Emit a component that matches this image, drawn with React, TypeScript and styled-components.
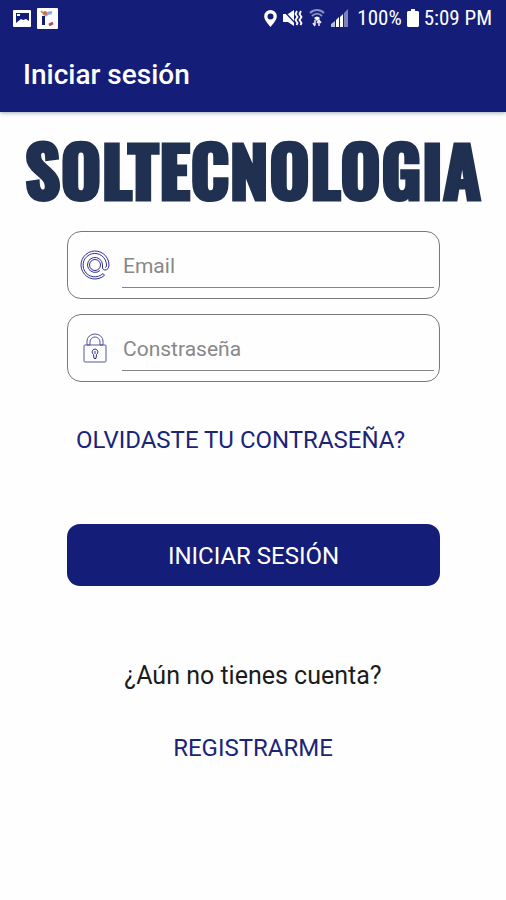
import React from 'react';
import styled, { createGlobalStyle } from 'styled-components';

const navy = '#141e78';

const GlobalStyle = createGlobalStyle`
  *, *::before, *::after { box-sizing: border-box; }
  body {
    margin: 0;
    background: #fefefe;
    font-family: Roboto, "Liberation Sans", sans-serif;
  }
`;

const Screen = styled.div`
  min-height: 100vh;
  display: flex;
  flex-direction: column;
`;

const Header = styled.header`
  background: ${navy};
  color: #fff;
  box-shadow: 0 1px 4px rgba(20, 50, 60, 0.4);
`;

const StatusBar = styled.div`
  display: flex;
  align-items: center;
  justify-content: space-between;
  height: 36px;
  padding: 0 14px 0 13px;
  font-family: "Roboto Condensed", Roboto, sans-serif;
  font-size: 21px;
  line-height: 36px;
`;

const StatusGroup = styled.div<{ $gap: number }>`
  display: flex;
  align-items: center;
  gap: ${({ $gap }) => $gap}px;

  svg { display: block; }
`;

const Title = styled.h1`
  margin: 0;
  padding: 23px 23px 21px;
  font-size: 28px;
  line-height: 32px;
  font-weight: 500;
`;

const Main = styled.main`
  display: flex;
  flex-direction: column;
  padding-top: 21px;
`;

const Brand = styled.div`
  color: #203050;
  font-family: Oswald, Impact, "Roboto Condensed", sans-serif;
  font-size: 70px;
  line-height: 70px;
  font-weight: 700;
  -webkit-text-stroke: 3px #203050;
  text-align: center;
  white-space: nowrap;
`;

const Form = styled.form`
  display: flex;
  flex-direction: column;
  padding: 28px 66px 0 67px;
`;

const Field = styled.label`
  display: flex;
  align-items: center;
  height: 68px;
  margin-bottom: 15px;
  padding: 0 5px 0 12px;
  border: 1px solid #77777c;
  border-radius: 14px;

  svg { flex: none; }
`;

const TextInput = styled.input`
  flex: 1;
  min-width: 0;
  height: 46px;
  margin-left: 12px;
  padding: 3px 1px 0;
  border: 0;
  border-bottom: 1px solid #858585;
  background: transparent;
  color: #222;
  font: 400 21px/24px Roboto, "Liberation Sans", sans-serif;

  &::placeholder { color: #888; opacity: 1; }
`;

const TextLink = styled.a`
  color: #1c2478;
  font-size: 24px;
  line-height: 30px;
  text-decoration: none;
`;

const ForgotLink = styled(TextLink)`
  align-self: flex-start;
  margin: 28px 0 0 9px;
`;

const SubmitButton = styled.button`
  height: 62px;
  margin-top: 69px;
  padding: 2px 0 0;
  border: 0;
  border-radius: 13px;
  background: ${navy};
  color: #fff;
  font: 400 24px/30px Roboto, "Liberation Sans", sans-serif;
`;

const SignUp = styled.section`
  display: flex;
  flex-direction: column;
  align-items: center;
  gap: 42px;
  padding-top: 75px;
`;

const Question = styled.p`
  margin: 0;
  color: #1c1c1c;
  font-size: 25px;
  line-height: 30px;
`;

const PictureIcon = () => (
  <svg width="18" height="17" viewBox="0 0 18 17" aria-hidden="true">
    <rect width="18" height="17" rx="1" fill="#fff" />
    <path d="M3 3h13v8l-3-2-3 1-2-1-5 4z" fill={navy} />
    <path d="M4 4h3v2H4z" fill="#fff" />
  </svg>
);

const AppIcon = () => (
  <svg width="21" height="21" viewBox="0 0 21 21" aria-hidden="true">
    <rect width="21" height="21" rx="1" fill="#fff" />
    <path d="M5 8h3v9H5z" fill={navy} />
    <path d="M8 8c2-3 4-4 7-3" fill="none" stroke="#8eaade" strokeWidth="3" />
    <path d="M4 3l4 4" stroke="#d39a67" strokeWidth="2" />
    <circle cx="8" cy="5" r="2" fill="#d86a3a" />
    <path d="M12 17l4-2" stroke="#b34a54" strokeWidth="3" />
  </svg>
);

const PinIcon = () => (
  <svg width="13" height="19" viewBox="0 0 13 19" aria-hidden="true">
    <path fill="#fff" fillRule="evenodd" d="M6.500 1A6.300 6.300 0 0 0 .2 7.300C.2 11 4 15 6.500 18 9 15 12.800 11 12.800 7.300A6.300 6.300 0 0 0 6.500 1zm0 3.500a3 3 0 1 1 0 6 3 3 0 0 1 0-6z" />
  </svg>
);

const VibrateIcon = () => (
  <svg width="20" height="18" viewBox="0 0 20 18" aria-hidden="true">
    <path d="M0 5h5l6-4v16l-6-4H0z" fill="#fff" />
    <path d="M0 1l13 14" stroke={navy} strokeWidth="1.200" />
    <path d="M14 2l-1.500 3 2 3-2 3 2 3-1 2M18 2l-1.500 3 2 3-2 3 2 3-1 2" fill="none" stroke="#fff" strokeWidth="1.800" />
  </svg>
);

const WifiIcon = () => (
  <svg width="16" height="18" viewBox="0 0 16 18" aria-hidden="true">
    <path d="M1 4c4-4 10-4 14 0M3 7c3-3 7-3 10 0" fill="none" stroke="#8990c3" strokeWidth="2" />
    <path d="M5 9c2-2 4-2 6 0l-3 3z" fill="#fff" />
    <path d="M6 11v5M4 14l2 3M10 17v-5M8 14l2-3 2 3" fill="none" stroke="#e8eaf6" strokeWidth="1.500" />
  </svg>
);

const SignalIcon = () => (
  <svg width="18" height="18" viewBox="0 0 18 18" aria-hidden="true">
    <path d="M0 18v-3l4-3v6z" fill="#b9bddc" />
    <path d="M5 18v-7l3-3v10zM9 18V8l3-3v13z" fill="#fff" />
    <path d="M13 18V4l4-4v18z" fill="#7b82bb" />
  </svg>
);

const BatteryIcon = () => (
  <svg width="12" height="18" viewBox="0 0 12 18" aria-hidden="true">
    <path d="M4 0h4v2h3l1 1v14l-1 1H1l-1-1V3l1-1h3z" fill="#fff" />
  </svg>
);

const AtIcon = () => (
  <svg width="30" height="30" viewBox="0 0 30 30" fill="none" stroke="#302f8d" aria-hidden="true">
    <path d="M20 20.500A7.500 7.500 0 1 1 22.500 15v2c0 2 1 3 2.500 3 2.500 0 4-2 4-5A14 14 0 1 0 24.500 25.300L23 23.500A11.700 11.700 0 1 1 26.500 15c0 1.500-.5 2.500-1.500 2.500" />
    <circle cx="15" cy="15" r="5.500" />
  </svg>
);

const LockIcon = () => (
  <svg width="30" height="30" viewBox="0 0 30 30" fill="none" stroke="#5557a0" aria-hidden="true">
    <path d="M7 12V8a8 7 0 0 1 16 0v4h-3V9a5 5 0 0 0-10 0v3z" />
    <rect x="4" y="12" width="22" height="17" rx="1" />
    <path d="M15 16a3 3 0 0 0-1.500 5.500l.5 4h2l.5-4A3 3 0 0 0 15 16zM15 18v3" stroke="#302f8d" />
  </svg>
);

export default function App() {
  return (
    <Screen>
      <GlobalStyle />
      <Header>
        <StatusBar>
          <StatusGroup $gap={6}>
            <PictureIcon />
            <AppIcon />
          </StatusGroup>
          <StatusGroup $gap={8}>
            <StatusGroup $gap={6}>
              <PinIcon />
              <VibrateIcon />
              <WifiIcon />
              <SignalIcon />
            </StatusGroup>
            <StatusGroup $gap={5}>
              <span>100%</span>
              <BatteryIcon />
              <time>5:09 PM</time>
            </StatusGroup>
          </StatusGroup>
        </StatusBar>
        <Title>Iniciar sesión</Title>
      </Header>
      <Main>
        <Brand>SOLTECNOLOGIA</Brand>
        <Form onSubmit={(event) => event.preventDefault()}>
          <Field>
            <AtIcon />
            <TextInput type="email" placeholder="Email" aria-label="Email" />
          </Field>
          <Field>
            <LockIcon />
            <TextInput type="password" placeholder="Constraseña" aria-label="Constraseña" />
          </Field>
          <ForgotLink href="#recuperar">OLVIDASTE TU CONTRASEÑA?</ForgotLink>
          <SubmitButton type="submit">INICIAR SESIÓN</SubmitButton>
        </Form>
        <SignUp>
          <Question>¿Aún no tienes cuenta?</Question>
          <TextLink href="#registro">REGISTRARME</TextLink>
        </SignUp>
      </Main>
    </Screen>
  );
}
